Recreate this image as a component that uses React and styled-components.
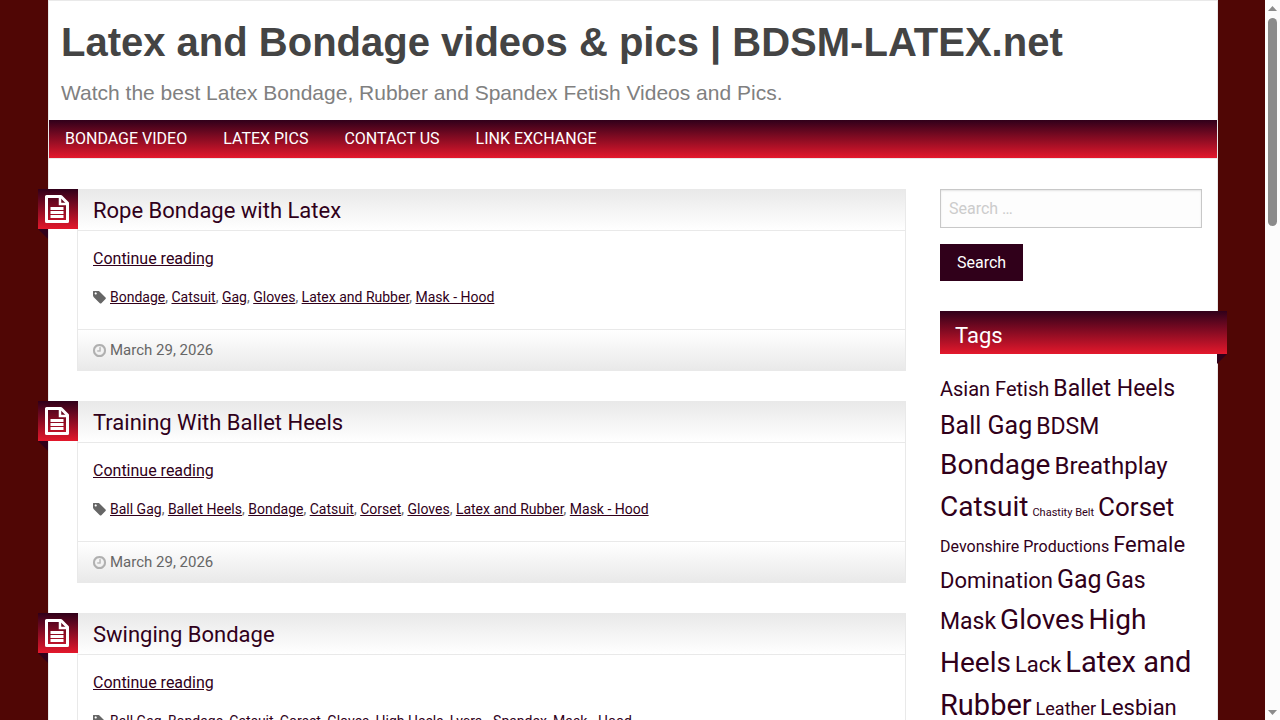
import React from "react";
import styled, { createGlobalStyle } from "styled-components";

const ink = "#30001a";
const ribbon = "linear-gradient(to bottom, #30001a, #e4182c)";
const rule = "#e9e9e9";

const GlobalStyle = createGlobalStyle`
  * { box-sizing: border-box; }
  body {
    margin: 0;
    background: #500605;
    color: #666;
    font: 16px/24px Roboto, sans-serif;
  }
  a { color: ${ink}; }
`;

const Viewport = styled.div`
  display: flex;
  height: 100vh;
  overflow: hidden;
`;

const Page = styled.div`
  flex: 1;
  min-width: 0;
  padding: 0 47px 0 48px;
`;

const Sheet = styled.div`
  min-height: 100%;
  background: #fff;
  border: 1px solid ${rule};
`;

const Masthead = styled.header`
  padding: 12px 12px 8px;
  font-family: "Liberation Sans", Arial, sans-serif;
`;

const SiteTitle = styled.h1`
  margin: 0;
  color: #444;
  font-size: 40px;
  line-height: 58px;
`;

const Tagline = styled.p`
  margin: 0;
  padding-top: 3px;
  color: #808080;
  font-size: 21px;
  line-height: 38px;
`;

const Nav = styled.nav`
  display: flex;
  gap: 36px;
  height: 38px;
  padding: 0 16px;
  background: ${ribbon};
`;

const NavLink = styled.a`
  color: #fff;
  line-height: 38px;
  text-decoration: none;
  text-transform: uppercase;
`;

const Columns = styled.div`
  display: flex;
  gap: 34px;
  padding: 30px 15px 0 28px;
  border-top: 1px solid ${rule};
`;

const Posts = styled.main`
  flex: 1;
  min-width: 0;
`;

const Sidebar = styled.aside`
  flex: 0 0 262px;
`;

const Post = styled.article`
  position: relative;
  margin-bottom: 30px;
  border: 1px solid ${rule};
`;

const Badge = styled.span`
  position: absolute;
  top: -1px;
  left: -40px;
  width: 40px;
  height: 40px;
  padding: 6px 7px;
  background: ${ribbon};

  svg { display: block; }

  &::after {
    content: "";
    position: absolute;
    top: 100%;
    left: 0;
    border-top: 10px solid ${ink};
    border-left: 10px solid transparent;
  }
`;

const PostTitle = styled.h2`
  margin: 0;
  padding: 2px 15px 0;
  border-bottom: 1px solid ${rule};
  background: linear-gradient(to bottom, #e9e9e9, #fff);
  font-size: 22px;
  font-weight: 400;
  line-height: 38px;

  a { text-decoration: none; }
`;

const PostBody = styled.div`
  padding: 16px 15px 20px;
`;

const More = styled.a`
  display: inline-block;
`;

const TagLine = styled.div`
  display: flex;
  align-items: center;
  gap: 4px;
  margin-top: 15px;
  font-size: 14px;
  line-height: 23px;
`;

const PostFooter = styled.footer`
  display: flex;
  align-items: center;
  gap: 4px;
  padding: 0 15px;
  border-top: 1px solid ${rule};
  background: linear-gradient(to bottom, #fff, #e9e9e9);
  font-size: 15px;
  line-height: 40px;
`;

const SearchForm = styled.form`
  margin: 0 0 30px;
`;

const SearchInput = styled.input`
  display: block;
  width: 100%;
  height: 39px;
  margin-bottom: 16px;
  padding: 0 8px;
  border: 1px solid #c8c8c8;
  border-radius: 0;
  background: #fdfdfd;
  box-shadow: inset 0 1px 2px rgba(0, 0, 0, 0.1);
  font: 16px Roboto, sans-serif;

  &::placeholder { color: #ccc; }
`;

const SearchButton = styled.button`
  display: block;
  height: 37px;
  padding: 0 17px;
  border: 0;
  background: ${ink};
  color: #fff;
  font: 16px Roboto, sans-serif;
`;

const WidgetTitle = styled.h2`
  position: relative;
  margin: 0 -25px 18px 0;
  padding: 7px 15px 0;
  background: ${ribbon};
  color: #fff;
  font-size: 22px;
  font-weight: 400;
  line-height: 36px;

  &::after {
    content: "";
    position: absolute;
    top: 100%;
    right: 0;
    border-top: 10px solid ${ink};
    border-right: 10px solid transparent;
  }
`;

const Cloud = styled.div`
  line-height: 1.5;
`;

const CloudTag = styled.a`
  font-size: ${(p) => p.$size}px;
  text-decoration: none;
`;

const Scrollbar = styled.div`
  display: flex;
  flex: 0 0 15px;
  flex-direction: column;
  align-items: center;
  background: #fcfcfc;
`;

const Arrow = styled.svg`
  flex: none;
  width: 15px;
  height: 18px;
  fill: #8b8b8b;
`;

const Thumb = styled.div`
  width: 9px;
  height: 208px;
  margin-bottom: auto;
  border-radius: 5px;
  background: #8b8b8b;
`;

const FileIcon = () => (
  <svg width="24" height="28" viewBox="0 0 24 28" aria-hidden="true">
    <path d="M1.5 1.5H16L22.5 8V26.500H1.5Z" fill="none" stroke="#fff" strokeWidth="3" strokeLinejoin="round" />
    <path d="M15 1V9H23" fill="none" stroke="#fff" strokeWidth="2.5" />
    <path d="M5.500 13.500H18.500M5.500 17.500H18.500M5.500 21.500H18.500" stroke="#fff" strokeWidth="2.800" />
  </svg>
);

const TagIcon = () => (
  <svg width="13" height="13" viewBox="128 192 1536 1480" fill="#666" aria-hidden="true">
    <path d="M576 448q0-53-37.500-90.500t-90.500-37.500-90.500 37.500-37.500 90.500 37.500 90.500 90.500 37.500 90.500-37.500 37.500-90.500zm1067 576q0 53-37 90l-491 492q-39 37-91 37-53 0-90-37l-715-716q-38-37-64.500-101t-26.500-117v-416q0-52 38-90t90-38h416q53 0 117 26.500t102 64.500l715 714q37 39 37 91z" />
  </svg>
);

const ClockIcon = () => (
  <svg width="13" height="13" viewBox="128 128 1536 1536" fill="#b0b0b0" stroke="#b0b0b0" strokeWidth="30" aria-hidden="true">
    <path d="M1024 544v448q0 14-9 23t-23 9h-320q-14 0-23-9t-9-23v-64q0-14 9-23t23-9h224v-352q0-14 9-23t23-9h64q14 0 23 9t9 23zm416 352q0-148-73-273t-198-198-273-73-273 73-198 198-73 273 73 273 198 198 273 73 273-73 198-198 73-273zm224 0q0 209-103 385.500t-279.500 279.500-385.500 103-385.500-103-279.500-279.500-103-385.500 103-385.500 279.500-279.500 385.500-103 385.500 103 279.500 279.500 103 385.500z" />
  </svg>
);

const navItems = ["Bondage Video", "Latex Pics", "Contact us", "Link Exchange"];

const posts = [
  {
    title: "Rope Bondage with Latex",
    tags: ["Bondage", "Catsuit", "Gag", "Gloves", "Latex and Rubber", "Mask - Hood"],
  },
  {
    title: "Training With Ballet Heels",
    tags: ["Ball Gag", "Ballet Heels", "Bondage", "Catsuit", "Corset", "Gloves", "Latex and Rubber", "Mask - Hood"],
  },
  {
    title: "Swinging Bondage",
    tags: ["Ball Gag", "Bondage", "Catsuit", "Corset", "Gloves", "High Heels", "Lycra - Spandex", "Mask - Hood"],
  },
];

const cloud = [
  ["Asian Fetish", 20],
  ["Ballet Heels", 23],
  ["Ball Gag", 25],
  ["BDSM", 23],
  ["Bondage", 28],
  ["Breathplay", 24],
  ["Catsuit", 28],
  ["Chastity Belt", 11],
  ["Corset", 26],
  ["Devonshire Productions", 16],
  ["Female Domination", 22],
  ["Gag", 25],
  ["Gas Mask", 23],
  ["Gloves", 28],
  ["High Heels", 28],
  ["Lack", 22],
  ["Latex and Rubber", 29],
  ["Leather", 18],
  ["Lesbian", 22],
];

export default function App() {
  return (
    <>
      <GlobalStyle />
      <Viewport>
        <Page>
          <Sheet>
            <Masthead>
              <SiteTitle>Latex and Bondage videos &amp; pics | BDSM-LATEX.net</SiteTitle>
              <Tagline>Watch the best Latex Bondage, Rubber and Spandex Fetish Videos and Pics.</Tagline>
            </Masthead>
            <Nav>
              {navItems.map((item) => (
                <NavLink key={item} href="#">{item}</NavLink>
              ))}
            </Nav>
            <Columns>
              <Posts>
                {posts.map((post) => (
                  <Post key={post.title}>
                    <Badge><FileIcon /></Badge>
                    <PostTitle><a href="#">{post.title}</a></PostTitle>
                    <PostBody>
                      <More href="#">Continue reading</More>
                      <TagLine>
                        <TagIcon />
                        <span>
                          {post.tags.map((tag, i) => (
                            <React.Fragment key={tag}>
                              {i > 0 && ", "}
                              <a href="#">{tag}</a>
                            </React.Fragment>
                          ))}
                        </span>
                      </TagLine>
                    </PostBody>
                    <PostFooter>
                      <ClockIcon />
                      <time dateTime="2026-03-29">March 29, 2026</time>
                    </PostFooter>
                  </Post>
                ))}
              </Posts>
              <Sidebar>
                <SearchForm role="search">
                  <SearchInput type="search" placeholder="Search …" aria-label="Search for" />
                  <SearchButton type="button">Search</SearchButton>
                </SearchForm>
                <WidgetTitle>Tags</WidgetTitle>
                <Cloud>
                  {cloud.map(([name, size]) => (
                    <React.Fragment key={name}>
                      <CloudTag href="#" $size={size}>{name}</CloudTag>{" "}
                    </React.Fragment>
                  ))}
                </Cloud>
              </Sidebar>
            </Columns>
          </Sheet>
        </Page>
        <Scrollbar aria-hidden="true">
          <Arrow viewBox="0 0 15 18"><path d="M3 11L7.500 6L12 11Z" /></Arrow>
          <Thumb />
          <Arrow viewBox="0 0 15 18"><path d="M3 8L7.500 13L12 8Z" /></Arrow>
        </Scrollbar>
      </Viewport>
    </>
  );
}
